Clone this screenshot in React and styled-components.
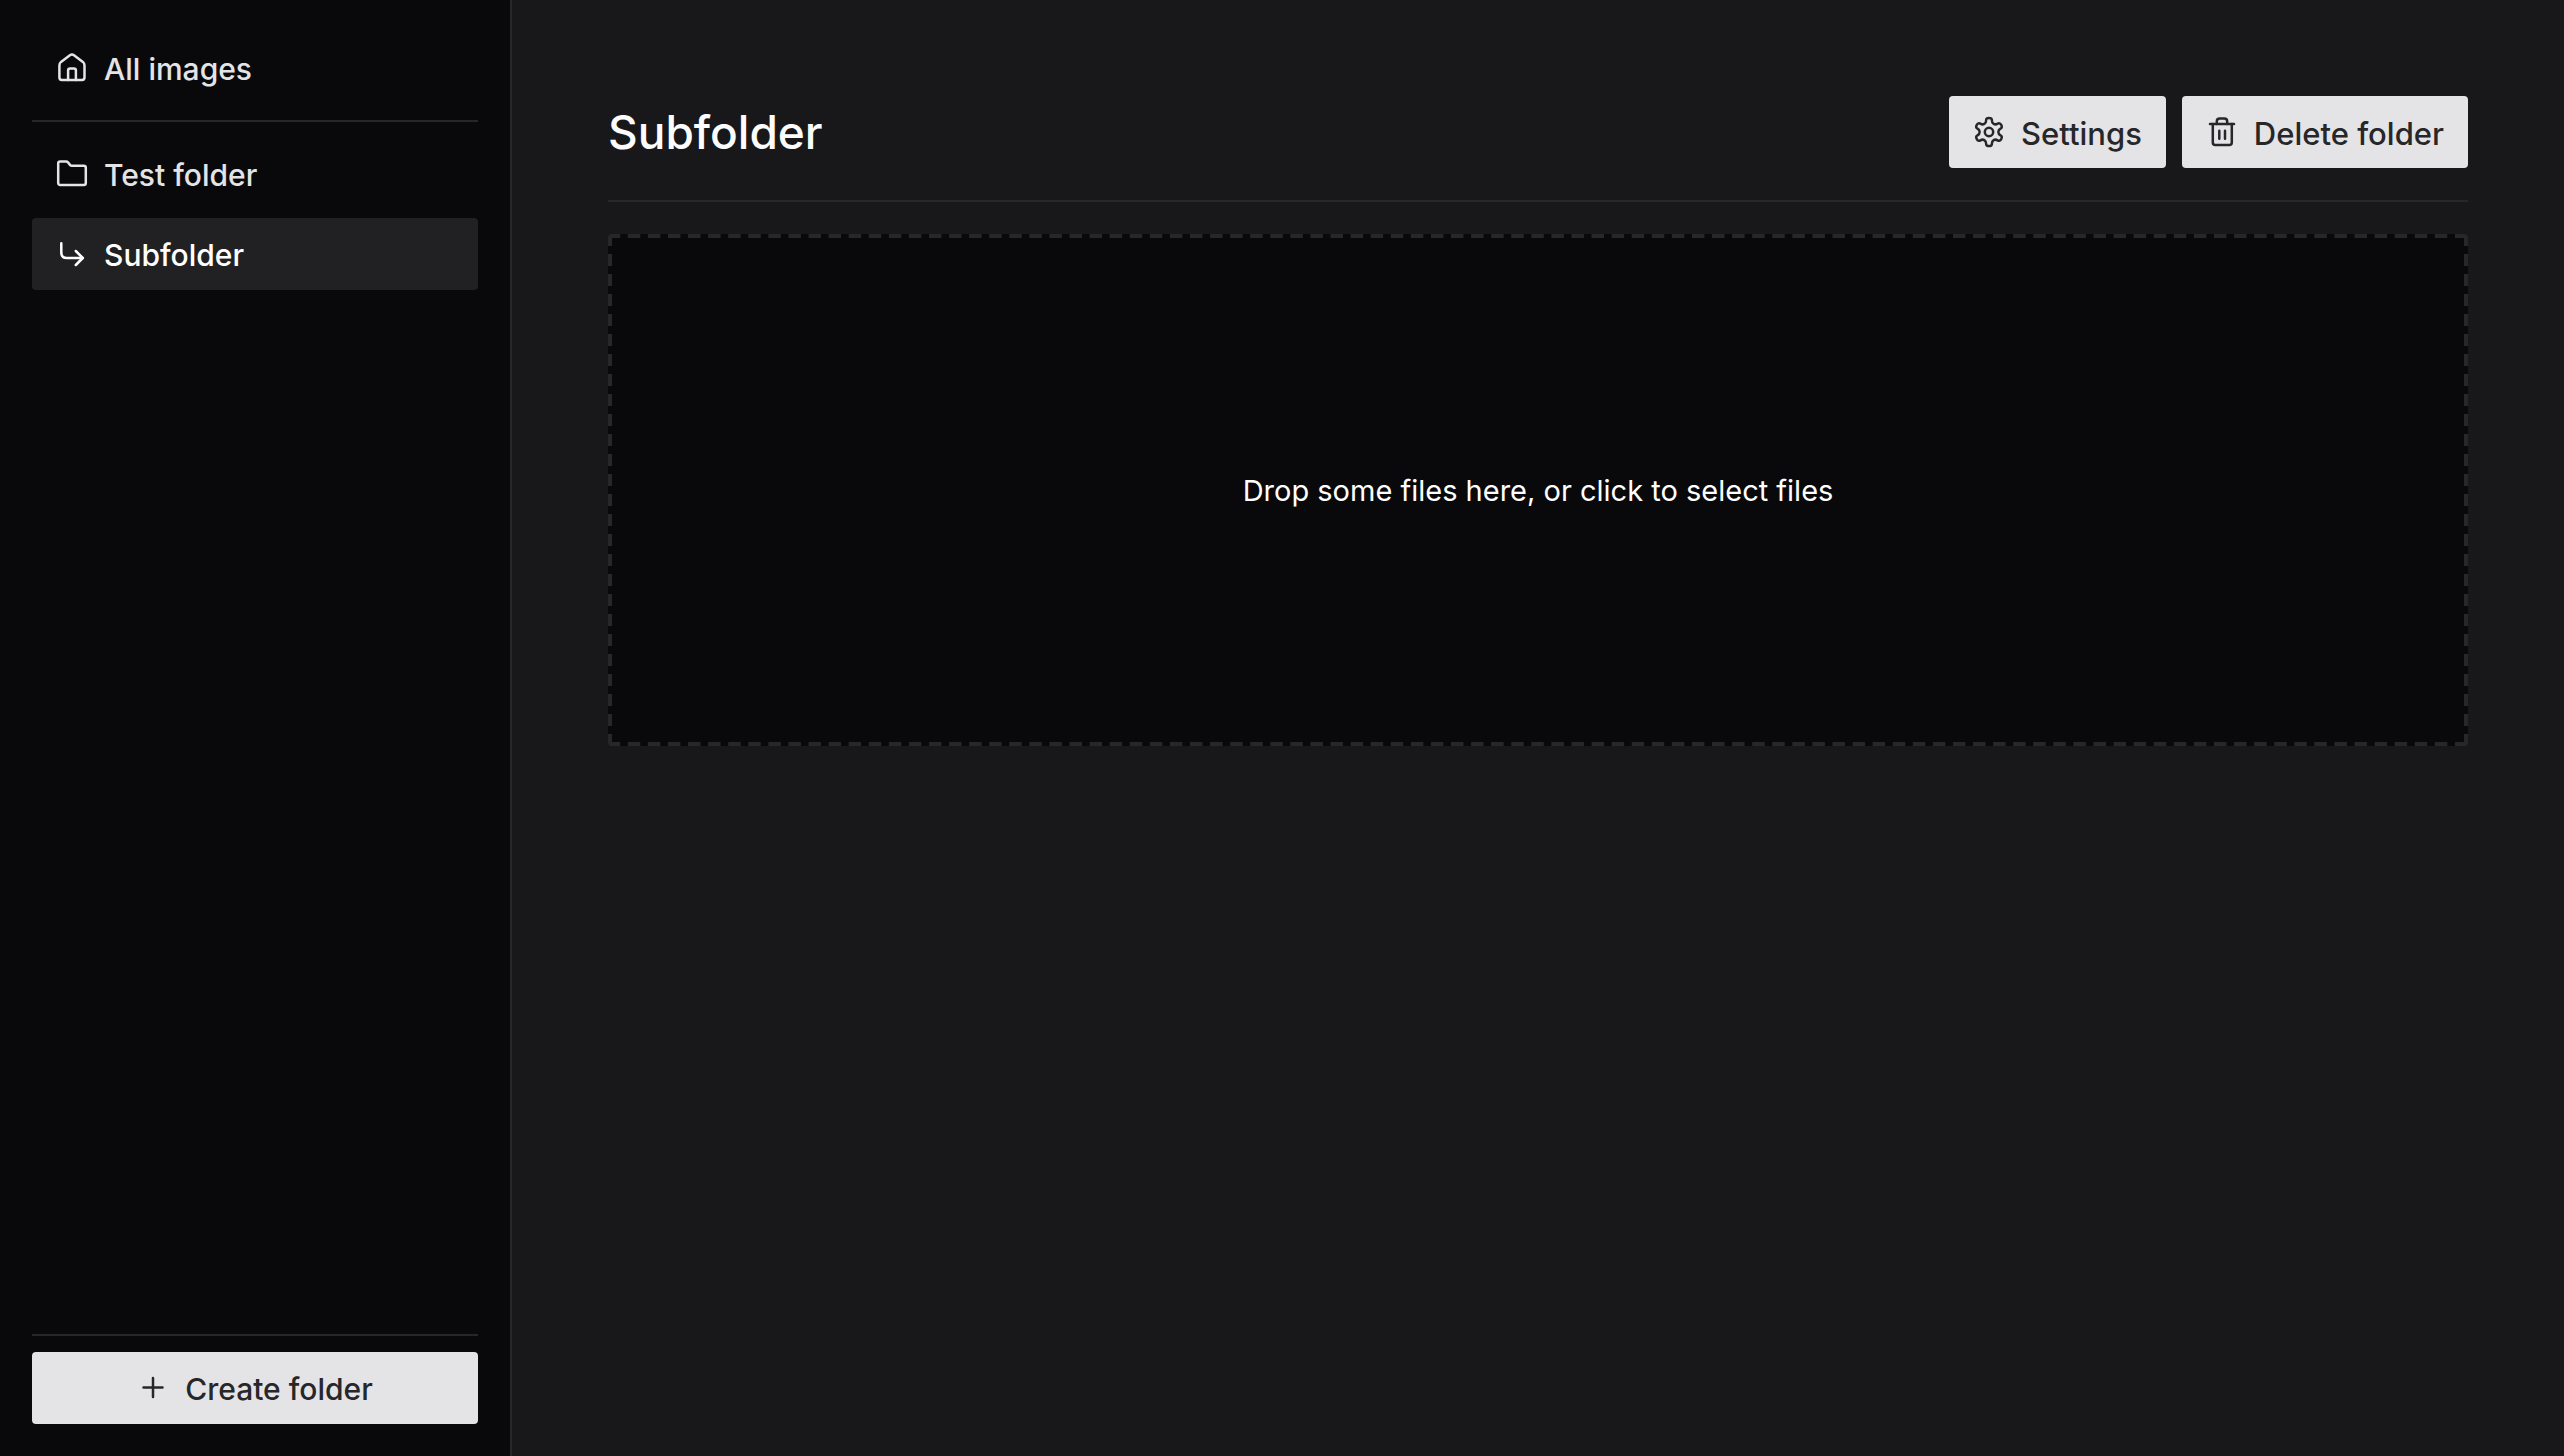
import React from 'react';
import styled, { createGlobalStyle } from 'styled-components';

const Global = createGlobalStyle`
  * { box-sizing: border-box; }
  body {
    margin: 0;
    background: #18181a;
    color: #fcfcfc;
    font-family: Inter, sans-serif;
    font-size: 30px;
  }
`;

const Shell = styled.div`
  display: grid;
  grid-template-columns: 512px 1fr;
  min-height: 100vh;
`;

const Sidebar = styled.aside`
  display: flex;
  flex-direction: column;
  gap: 16px;
  padding: 32px;
  background: #09090b;
  border-right: 2px solid #27272a;
`;

const Nav = styled.nav`
  display: flex;
  flex-direction: column;
  gap: 8px;
  flex: ${p => (p.$grow ? 1 : 'none')};
`;

const Rule = styled.hr`
  width: 100%;
  height: 2px;
  margin: 0;
  border: 0;
  background: #27272a;
`;

const NavLink = styled.a`
  display: flex;
  align-items: center;
  gap: 16px;
  height: 72px;
  padding: 0 24px;
  border-radius: 4px;
  background: ${p => (p.$active ? '#212123' : 'transparent')};
  color: ${p => (p.$active ? '#ffffff' : '#e4e4e7')};
  font-weight: 500;
  text-decoration: none;
`;

const Button = styled.button`
  display: flex;
  align-items: center;
  justify-content: center;
  gap: 16px;
  height: 72px;
  padding: 0 24px;
  border: 0;
  border-radius: 4px;
  background: #e4e4e7;
  color: #27272a;
  font: inherit;
  font-weight: 500;
`;

const Label = styled.span`
  padding-top: 2px;
`;

const Main = styled.main`
  display: flex;
  flex-direction: column;
  gap: 32px;
  padding: 96px;
`;

const Header = styled.header`
  display: flex;
  align-items: center;
  justify-content: space-between;
  padding-bottom: 32px;
  border-bottom: 2px solid #27272a;
`;

const Title = styled.h1`
  margin: 0;
  font-size: 46px;
  font-weight: 500;
`;

const Actions = styled.div`
  display: flex;
  gap: 16px;
`;

/* Each edge is a row of 12px dashes; whole tiles are fitted between the
   16px paddings, so that every corner ends on a full dash. */
const dashes = angle =>
  `linear-gradient(${angle}, transparent 20%, #27272a 20% 80%, transparent 80%)`;

const DropZone = styled.button`
  height: 512px;
  padding: 16px;
  border: 0;
  border-radius: 4px;
  background-color: #09090b;
  background-image: ${dashes('90deg')}, ${dashes('90deg')}, ${dashes('180deg')}, ${dashes('180deg')};
  background-origin: content-box;
  background-size: 20px 4px, 20px 4px, 4px 20px, 4px 20px;
  background-repeat: round no-repeat, round no-repeat, no-repeat round, no-repeat round;
  background-position: 0 -16px, 0 calc(100% + 16px), -16px 0, calc(100% + 16px) 0;
  color: #ffffff;
  font: inherit;
  font-size: 29px;
`;

const Svg = styled.svg`
  flex: none;
  width: 32px;
  height: 32px;
  fill: none;
  stroke: currentColor;
  stroke-width: 2.5;
  stroke-linecap: round;
  stroke-linejoin: round;
`;

const Icon = ({ children }) => (
  <Svg viewBox="0 0 32 32" aria-hidden="true">{children}</Svg>
);

const polar = (r, deg) => {
  const a = (deg * Math.PI) / 180;
  return [16 + r * Math.cos(a), 16 + r * Math.sin(a)];
};

/* A six-toothed gear, rounded by curving through the midpoints of its outline. */
const gearPath = (() => {
  const pts = [];
  for (let a = -90; a < 270; a += 60) {
    pts.push(polar(9.6, a - 17), polar(14.4, a - 12), polar(14.4, a + 12), polar(9.6, a + 17));
  }
  const mid = (p, q) => [(p[0] + q[0]) / 2, (p[1] + q[1]) / 2];
  const fmt = p => p.map(n => n.toFixed(2)).join(' ');
  const start = mid(pts[pts.length - 1], pts[0]);
  return `M${fmt(start)}${pts
    .map((p, i) => `Q${fmt(p)} ${fmt(mid(p, pts[(i + 1) % pts.length]))}`)
    .join('')}Z`;
})();

const HomeIcon = () => (
  <Icon>
    <path d="M3.4 13.4c0-1.5.5-2.6 1.6-3.5l8.9-6.7c1.3-1 2.8-1 4.1 0l8.9 6.7c1.1.9 1.6 2 1.6 3.5v12.2c0 1.6-.8 2.4-2.4 2.4H5.8c-1.6 0-2.4-.8-2.4-2.4z" />
    <path d="M12.1 28v-9.5c0-1.3.7-2 2-2h3.8c1.3 0 2 .7 2 2V28" />
  </Icon>
);

const FolderIcon = () => (
  <Icon>
    <path d="M2.2 5.5c0-1.3.7-2 2-2h5.9c.8 0 1.400.3 1.900.9l2.200 2.700c.4.500.9.700 1.600.700h12c1.300 0 2 .700 2 2v15.100c0 1.300-.7 2-2 2H4.200c-1.300 0-2-.7-2-2z" />
  </Icon>
);

const SubfolderIcon = () => (
  <Icon>
    <path d="M5.3 5.2v9.4c0 3.6 1.8 5.4 5.4 5.4h16" />
    <path d="M19.8 13l7 7-7 7" />
  </Icon>
);

const PlusIcon = () => (
  <Icon><path d="M6.5 15.500h19M16 6v19" /></Icon>
);

const GearIcon = () => (
  <Icon>
    <path d={gearPath} />
    <circle cx="16" cy="16" r="4.2" />
  </Icon>
);

const TrashIcon = () => (
  <Icon>
    <path d="M4 8h24" />
    <path d="M6.8 8v18.4c0 1.6.9 2.5 2.5 2.5h14c1.6 0 2.5-.9 2.5-2.5V8" />
    <path d="M10.8 8V5.4c0-1.8 1.1-2.9 2.9-2.9h4.6c1.8 0 2.9 1.1 2.9 2.9V8" />
    <path d="M13.3 14.800v8M19 14.800v8" />
  </Icon>
);

const HeaderButton = styled(Button)`
  font-size: 31px;
`;

export default function App() {
  return (
    <>
      <Global />
      <Shell>
        <Sidebar>
          <Nav>
            <NavLink href="#all"><HomeIcon /><Label>All images</Label></NavLink>
          </Nav>
          <Rule />
          <Nav $grow>
            <NavLink href="#test"><FolderIcon /><Label>Test folder</Label></NavLink>
            <NavLink href="#sub" $active aria-current="page"><SubfolderIcon /><Label>Subfolder</Label></NavLink>
          </Nav>
          <Rule />
          <Button type="button"><PlusIcon /><Label>Create folder</Label></Button>
        </Sidebar>
        <Main>
          <Header>
            <Title>Subfolder</Title>
            <Actions>
              <HeaderButton type="button"><GearIcon /><Label>Settings</Label></HeaderButton>
              <HeaderButton type="button"><TrashIcon /><Label>Delete folder</Label></HeaderButton>
            </Actions>
          </Header>
          <DropZone type="button">Drop some files here, or click to select files</DropZone>
        </Main>
      </Shell>
    </>
  );
}
